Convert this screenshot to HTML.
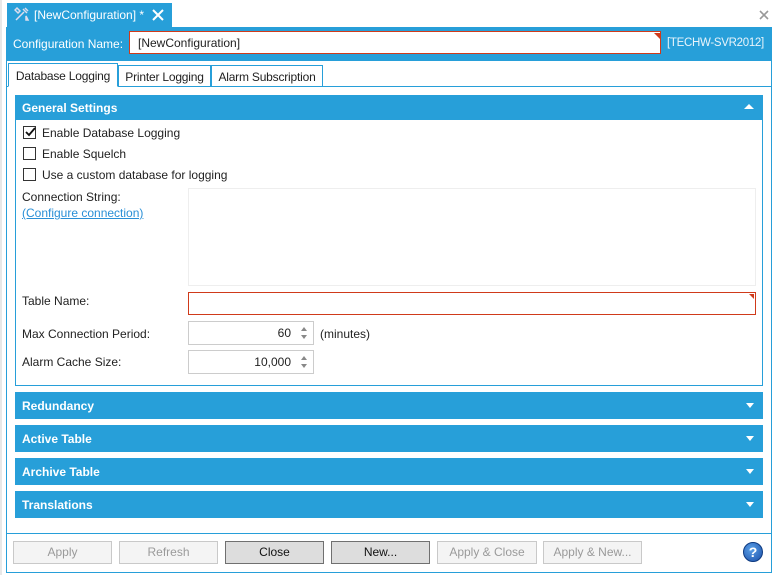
<!DOCTYPE html>
<html><head><style>
*{box-sizing:border-box;margin:0;padding:0}
body{width:775px;height:575px;background:#fff;font-family:"Liberation Sans",sans-serif;font-size:12px;color:#222;position:relative;overflow:hidden}
.a{position:absolute}
.blue{background:#279fd9}
.sec{position:absolute;left:15px;width:748px;height:27px;background:#279fd9;color:#fff;font-weight:bold;font-size:12px;padding:7px 0 0 7px}
.sec:after{content:"";position:absolute;right:9px;top:11px;border-left:4px solid transparent;border-right:4px solid transparent;border-top:5px solid #fff}
.cb{position:absolute;left:23px;width:13px;height:13px;border:1px solid #333;background:#fff}
.lbl{position:absolute;font-size:12px}
.btn{position:absolute;top:541px;width:99px;height:23px;border:1px solid #c9c9c9;background:#f4f4f4;color:#9a9a9a;text-align:center;line-height:21px;font-size:12px}
.btn.d{background:#dddddd;border-color:#707070;color:#111}
.tab{position:absolute;top:65px;height:22px;border:1px solid #279fd9;background:#fff;padding-top:4px;text-align:center;font-size:12px;letter-spacing:-0.2px}
.num{position:absolute;left:188px;width:126px;height:24px;border:1px solid #ccc;text-align:right;padding:4px 22px 0 0}
.sp{position:absolute;right:5px;top:4px;width:7px;height:14px}
.sp:before{content:"";position:absolute;top:1px;left:0;border-left:3.5px solid transparent;border-right:3.5px solid transparent;border-bottom:4px solid #888}
.sp:after{content:"";position:absolute;bottom:1px;left:0;border-left:3.5px solid transparent;border-right:3.5px solid transparent;border-top:4px solid #888}
</style></head><body>
<div class="a" style="left:0;top:0;width:2px;height:575px;background:#e8e8e8"></div>
<div class="a blue" style="left:7px;top:3px;width:165px;height:25px;color:#fff;padding:5px 0 0 27px;font-size:12px">[NewConfiguration] *</div>
<svg class="a" style="left:14px;top:6px" width="16" height="16" viewBox="0 0 16 16"><path d="M2 14L10 6M9 3l4 4M11 2l3 3M3 2l3 3 -2 2 -3-3z M12 10l2 4-2 0z" stroke="#dde" stroke-width="1.5" fill="none"/></svg>
<svg class="a" style="left:152px;top:9px" width="12" height="12"><path d="M1 1L11 11M11 1L1 11" stroke="#fff" stroke-width="2"/></svg>
<svg class="a" style="left:759px;top:10px" width="10" height="10"><path d="M1 1L9 9M9 1L1 9" stroke="#999" stroke-width="1.6"/></svg>
<div class="a blue" style="left:6px;top:27px;width:766px;height:34px"></div>
<div class="lbl" style="left:13px;top:37px;color:#fff">Configuration Name:</div>
<div class="a" style="left:129px;top:31px;width:532px;height:23px;background:#fff;border:1px solid #d03a1a;padding:4px 0 0 8px">[NewConfiguration]</div>
<div class="a" style="left:654px;top:33px;border-left:6px solid transparent;border-top:6px solid #d03a1a"></div>
<div class="lbl" style="left:667px;top:37px;color:#e8f4fb;font-size:11.5px;letter-spacing:-0.3px">[TECHW-SVR2012]</div>
<div class="a" style="left:6px;top:60px;width:766px;height:513px;border:1px solid #279fd9;border-top:none"></div>
<div class="a" style="left:7px;top:86px;width:765px;height:1px;background:#279fd9"></div>
<div class="tab" style="left:8px;top:63px;width:110px;height:24px;padding-top:5px;border-bottom:1px solid #fff">Database Logging</div>
<div class="tab" style="left:118px;width:93px">Printer Logging</div>
<div class="tab" style="left:211px;width:112px">Alarm Subscription</div>
<div class="a" style="left:15px;top:95px;width:748px;height:291px;border:1px solid #279fd9"></div>
<div class="a blue" style="left:15px;top:95px;width:748px;height:25px;color:#fff;font-weight:bold;padding:6px 0 0 7px">General Settings</div>
<div class="a" style="left:744px;top:104px;border-left:5px solid transparent;border-right:5px solid transparent;border-bottom:5px solid #fff"></div>
<div class="cb" style="top:126px"></div>
<svg class="a" style="left:24px;top:126px" width="12" height="12"><path d="M2 6l3 3 6-7" stroke="#111" stroke-width="1.8" fill="none"/></svg>
<div class="lbl" style="left:42px;top:126px">Enable Database Logging</div>
<div class="cb" style="top:147px"></div><div class="lbl" style="left:42px;top:147px">Enable Squelch</div>
<div class="cb" style="top:168px"></div><div class="lbl" style="left:42px;top:168px">Use a custom database for logging</div>
<div class="lbl" style="left:22px;top:190px">Connection String:</div>
<div class="lbl" style="left:22px;top:206px;color:#2a8fd6;text-decoration:underline">(Configure connection)</div>
<div class="a" style="left:188px;top:188px;width:568px;height:98px;border:1px solid #eee"></div>
<div class="lbl" style="left:22px;top:294px">Table Name:</div>
<div class="a" style="left:188px;top:292px;width:568px;height:23px;border:1px solid #d03a1a"></div>
<div class="a" style="left:749px;top:294px;border-left:5px solid transparent;border-top:5px solid #d03a1a"></div>
<div class="lbl" style="left:22px;top:327px">Max Connection Period:</div>
<div class="num" style="top:321px">60<span class="sp"></span></div>
<div class="lbl" style="left:320px;top:327px">(minutes)</div>
<div class="lbl" style="left:22px;top:355px">Alarm Cache Size:</div>
<div class="num" style="top:350px">10,000<span class="sp"></span></div>
<div class="sec" style="top:392px">Redundancy</div>
<div class="sec" style="top:425px">Active Table</div>
<div class="sec" style="top:458px">Archive Table</div>
<div class="sec" style="top:491px">Translations</div>
<div class="a" style="left:7px;top:533px;width:765px;height:1px;background:#279fd9"></div>
<div class="btn" style="left:13px">Apply</div>
<div class="btn" style="left:119px">Refresh</div>
<div class="btn d" style="left:225px">Close</div>
<div class="btn d" style="left:331px">New...</div>
<div class="btn" style="left:437px;width:100px">Apply &amp; Close</div>
<div class="btn" style="left:543px">Apply &amp; New...</div>
<div class="a" style="left:743px;top:542px;width:20px;height:20px;border-radius:50%;background:radial-gradient(circle at 40% 35%,#5aa0e8,#1b4fa8);border:1px solid #0d3a80;color:#fff;font-weight:bold;font-size:14px;text-align:center;line-height:18px">?</div>
</body></html>
